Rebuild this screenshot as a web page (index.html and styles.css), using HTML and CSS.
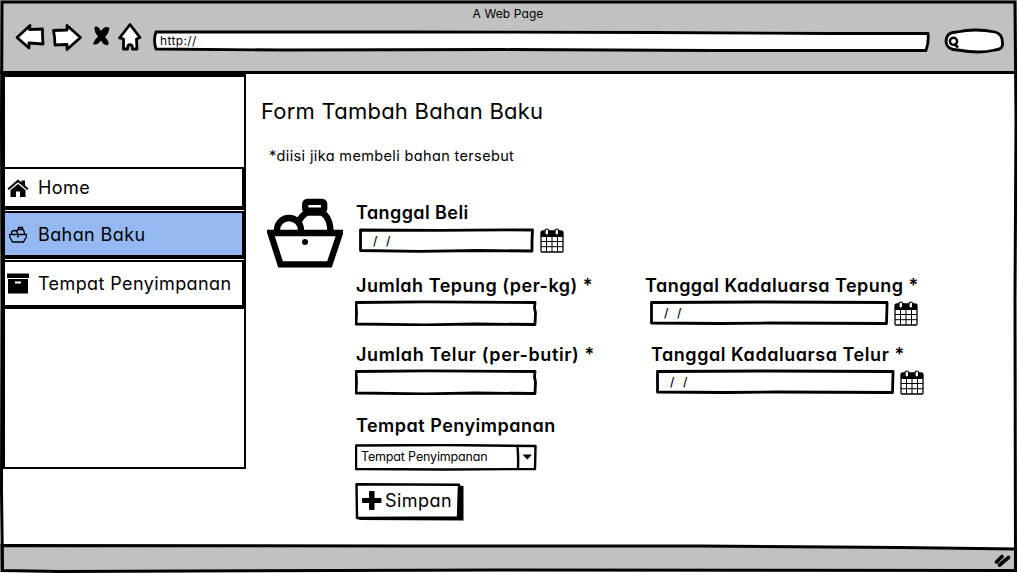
FILE: index.html
```html
<!DOCTYPE html>
<html lang="id">
<head>
<meta charset="utf-8">
<title>A Web Page</title>
<link rel="stylesheet" href="styles.css">
</head>
<body>
<svg class="defs" width="0" height="0">
  <defs>
    <symbol id="basket" viewBox="0 0 76 71">
      <path d="M3.500 35H73L62.500 66.300H13.500Z" class="weave"/>
      <path d="M10 35V32A12 12 0 0 1 34 32V35M31 25Q34 18 40 14.500H55C61 18 63.500 25 63.500 35" class="weave"/>
      <rect x="38.200" y="3.800" width="19" height="8.800" rx="2" class="weave"/>
      <circle cx="38" cy="44" r="3" fill="#000" stroke="none"/>
    </symbol>
    <symbol id="calendar" viewBox="0 0 24 25">
      <path d="M1 5Q1 3 3 3H21Q23 3 23 5V23Q23 24 22 24H2Q1 24 1 23Z" fill="#fff" stroke="#000" stroke-width="1.300"/>
      <path d="M1 4.500Q1 3 3 3H21Q23 3 23 4.500V9H1Z" fill="#000"/>
      <path d="M6.500 9V24M12 9V24M17.500 9V24M1 13.500H23M1 18.700H23" stroke="#000" stroke-width="1"/>
      <rect x="5" y="1" width="3.600" height="6" rx="1.800" fill="#fff" stroke="#000" stroke-width="1.200"/>
      <rect x="15" y="1" width="3.600" height="6" rx="1.800" fill="#fff" stroke="#000" stroke-width="1.200"/>
    </symbol>
  </defs>
</svg>
<div class="window">
  <header class="chrome">
    <div class="page-title">A Web Page</div>
    <div class="toolbar">
      <svg class="nav-icons" width="128" height="30" viewBox="0 0 128 30">
        <path class="sketch" d="M2 14.500L15 2.500L14.500 6.500L27.500 6V12L28 21L14 20V25Z"/>
        <path class="sketch" d="M38.500 7.500L52 7V2.500L65.500 14.500L52 26.500V21.500L40 22L39.500 14Z"/>
        <path d="M79.500 4Q83 2 86 8Q90 2 94.500 5Q94 10 90 14Q95 19 93 22Q89 23 86 17.500Q82 23 78 21Q79 17 83 13.500Q79 9 79.500 4Z"/>
        <path class="sketch" d="M115 1.500L125 14.500L121.500 16L122 26H117.500L117 22.500Q115 21 113 22.500L112.500 26H108.500V16L104.500 15Z"/>
      </svg>
      <div class="address">
        <svg class="frame" width="777" height="22" viewBox="0 0 777 22"><path class="sketch" d="M3 2L250 2L500 2.500L680 3.500L775 3.500Q776 12 773 20.500L560 20.500L350 19.500L130 20L3 19Q0 10 3 2Z"/></svg>
        <span class="address-text">http://</span>
      </div>
      <svg class="search" width="60" height="26" viewBox="0 0 60 26">
        <path class="sketch" d="M2 14Q2 4 13 4Q31 0 51 4Q59 6 58.500 16Q59 21 51 22Q36 26 14 22Q3 22 2 14Z"/>
        <circle cx="9.500" cy="13.300" r="3.600" fill="none" stroke="#000" stroke-width="2.400"/>
        <path d="M10.500 16L14 19.500" stroke="#000" stroke-width="2.600"/>
      </svg>
    </div>
  </header>
  <main class="page">
    <aside class="sidebar">
      <nav class="menu">
        <a class="item home">
          <svg width="22" height="18" viewBox="0 0 22 18"><path d="M0.500 9.500L11 .5L14.500 3.500V1.500H18V6.500L21.500 9.500L20.300 11L11 3.200L1.700 11Z"/><path d="M3.500 11L11 5L18.500 11V18H13V12.500H9V18H3.500Z"/></svg>
          <span>Home</span>
        </a>
        <a class="item active">
          <svg class="outline" width="18" height="17" viewBox="0 0 18 17"><path d="M.5 8.500H17.500V10.500L14.500 16H3.500L.5 10.500ZM2.500 8V7.500A3 3 0 0 1 8.500 7.500V8M7.500 5.500L9 3.500H14Q15.500 5 15.500 8M9.500 3.500V1.500H13.500V3.500M8 10.500H10" stroke-width="1.300"/></svg>
          <span>Bahan Baku</span>
        </a>
        <a class="item storage">
          <svg width="22" height="21" viewBox="0 0 22 21"><path d="M0 .5H22V5H0ZM1 6H21V20.500H1ZM8 8.500V10.500H14V8.500Z" fill-rule="evenodd"/></svg>
          <span>Tempat Penyimpanan</span>
        </a>
      </nav>
    </aside>
    <section class="content">
      <h1>Form Tambah Bahan Baku</h1>
      <p class="note">*diisi jika membeli bahan tersebut</p>
      <div class="form-area">
        <svg class="outline basket" width="76" height="71"><use href="#basket" width="76" height="71"/></svg>
        <form class="form">
          <div class="row r1">
            <div class="field f-buy">
              <label>Tanggal Beli</label>
              <div class="date"><div class="box short"><svg class="frame" width="175" height="25" viewBox="0 0 175 25"><path class="sketch" d="M1.500 2L80 2.300L150 1.800L173.500 2L173 13L173 23L120 22.500L60 23.300L1.500 22.500Z"/></svg><span class="s">/</span><span class="s">/</span></div><svg class="cal" width="24" height="25"><use href="#calendar" width="24" height="25"/></svg></div>
            </div>
          </div>
          <div class="row r2">
            <div class="field f-flour">
              <label>Jumlah Tepung (per-kg) *</label>
              <div class="box plain"><svg class="frame" width="182" height="26" viewBox="0 0 182 26"><path class="sketch" d="M1 2.500L70 1.800L180 2.500L179.500 8L180.500 13L180 24.500L120 24L70 24.800L1 24L1.500 13Z"/></svg></div>
            </div>
            <div class="field f-flour-exp">
              <label>Tanggal Kadaluarsa Tepung *</label>
              <div class="date wide"><div class="box long"><svg class="frame" width="239" height="25" viewBox="0 0 239 25"><path class="sketch" d="M1.500 2.500L110 2L237 2.500L237 5L236.500 23.500L120 23L70 23.500L1.500 23Z"/></svg><span class="s">/</span><span class="s">/</span></div><svg class="cal" width="24" height="25"><use href="#calendar" width="24" height="25"/></svg></div>
            </div>
          </div>
          <div class="row r3">
            <div class="field f-egg">
              <label>Jumlah Telur (per-butir) *</label>
              <div class="box plain"><svg class="frame" width="182" height="26" viewBox="0 0 182 26"><path class="sketch" d="M1 2.500L70 1.800L180 2.500L179.500 8L180.500 13L180 24.500L120 24L70 24.800L1 24L1.500 13Z"/></svg></div>
            </div>
            <div class="field f-egg-exp">
              <label>Tanggal Kadaluarsa Telur *</label>
              <div class="date wide"><div class="box long"><svg class="frame" width="239" height="25" viewBox="0 0 239 25"><path class="sketch" d="M1.500 2.500L110 2L237 2.500L237 5L236.500 23.500L120 23L70 23.500L1.500 23Z"/></svg><span class="s">/</span><span class="s">/</span></div><svg class="cal" width="24" height="25"><use href="#calendar" width="24" height="25"/></svg></div>
            </div>
          </div>
          <div class="row r4">
            <div class="field f-place">
              <label>Tempat Penyimpanan</label>
              <div class="select"><svg class="frame" width="182" height="27" viewBox="0 0 182 27"><path class="sketch thin" d="M1 1.500L90 1L180.500 2L180 25L90 25.500L1 25ZM162.500 2Q163.500 14 163 25"/><path d="M167.500 10.500H177L172.300 15.500Z"/></svg><span>Tempat Penyimpanan</span></div>
            </div>
          </div>
          <div class="save">
            <svg class="frame" width="109" height="38" viewBox="0 0 109 38"><path d="M103 2.500L108.500 3V37.500L4 37V33L103 33Z"/><path class="sketch thin" d="M1.500 1.200L104 1.700L103 34.500L2 35Z"/></svg>
            <svg class="plus" width="20" height="19" viewBox="0 0 20 19"><path d="M7 1Q7 0 8 0H11.500Q12.500 0 12.500 1V7H18.500Q19.500 7 19.500 8V11Q19.500 12 18.500 12H12.500V18Q12.500 19 11.500 19H8Q7 19 7 18V12H1Q0 12 0 11V8Q0 7 1 7H7Z"/></svg>
            <span>Simpan</span>
          </div>
        </form>
      </div>
    </section>
  </main>
  <footer class="status">
    <svg class="frame" width="1017" height="29" viewBox="0 0 1017 29"><path class="bar" d="M2 1.500L400 2L700 2L900 3.500L1016 5V26.500L500 26L60 27.500L2 26.500Z"/></svg>
    <svg class="grip" width="18" height="15" viewBox="0 0 18 15"><path d="M2.500 9L8 3.500M5.500 12L14.500 4.500" stroke="#000" stroke-width="3.600" stroke-linecap="round"/></svg>
  </footer>
  <svg class="edges" width="1017" height="573" viewBox="0 0 1017 573"><path d="M2.500 571L1.500 490L2 300L1.500 120L2 2L1015 2L1016 120L1015 300L1015.500 571"/></svg>
</div>
</body>
</html>
```
FILE: styles.css
```css
* { box-sizing: border-box; }
body {
  margin: 0;
  background: #fff;
  color: #000;
  font-family: Inter, Lato, "Liberation Sans", sans-serif;
  font-feature-settings: "cv11" 1;
}
.defs { position: absolute; }
.window {
  position: relative;
  display: flex;
  flex-direction: column;
  width: 1017px;
  height: 573px;
  overflow: hidden;
}
.edges { position: absolute; inset: 0; pointer-events: none; fill: none; stroke: #000; stroke-width: 3; }
.frame { position: absolute; left: 0; top: 0; z-index: -1; }
.sketch { fill: #fff; stroke: #000; stroke-width: 2.8; stroke-linejoin: round; }
.sketch.thin { stroke-width: 2.4; }
.outline { fill: none; stroke: #000; }
.weave { stroke-width: 6.3; }

.chrome { height: 74px; background: #c1c1c1; border-bottom: 3px solid #000; padding-top: 4px; }
.page-title { text-align: center; font-size: 12px; line-height: 19px; letter-spacing: 0.1px; padding-right: 1px; }
.toolbar { display: flex; align-items: flex-start; padding-left: 15px; }
.nav-icons { display: block; }
.address {
  position: relative;
  z-index: 0;
  width: 777px;
  height: 22px;
  margin: 7px 14px 0 10px;
  padding-left: 7px;
  font-size: 12px;
  line-height: 21px;
  letter-spacing: 0.35px;
}
.search { margin-top: 5px; }

.page { display: flex; height: 470px; }
.sidebar {
  width: 243px;
  height: 395px;
  margin-left: 3px;
  border: solid #000;
  border-width: 3px 2px 2px;
  padding-top: 90px;
}
.menu { display: flex; flex-direction: column; }
.item {
  display: flex;
  align-items: center;
  height: 43px;
  border: solid #000;
  border-width: 2px 2px 4px 0;
  font-size: 18px;
  line-height: 24px;
  letter-spacing: 0.4px;
}
.item svg { flex: none; margin-left: 2px; }
.item span { margin-left: 9px; white-space: nowrap; }
.home { margin-bottom: 1px; }
.active { height: 48px; background: #94b9f2; }
.item.active svg { margin-left: 4px; }
.item.active span { margin-left: 11px; padding-top: 2px; }
.storage { height: 49px; margin-top: 1px; }

.content { padding: 22px 0 0 15px; }
h1 { margin: 0; font-size: 22px; line-height: 31px; font-weight: 400; letter-spacing: 0.23px; }
.note { margin: 19px 0 0 8px; font-size: 14.500px; line-height: 20px; letter-spacing: 0.36px; }
.form-area { display: flex; padding: 32px 0 0 6px; }
.basket { display: block; flex: none; margin: 0 13px 0 0; }
.form { padding-top: 3px; }
.row { display: flex; }
.r1 { height: 73px; }
.r2 { height: 69px; }
.r3 { height: 71px; }
.r4 { height: 69px; }
.field { width: 289px; }
label { display: block; font-size: 18px; line-height: 24px; font-weight: 600; white-space: nowrap; }
.f-buy label { letter-spacing: 0.42px; }
.f-flour label { letter-spacing: 0.5px; }
.f-egg label { letter-spacing: 0.62px; }
.f-flour-exp label { letter-spacing: 0.47px; }
.f-egg-exp label { letter-spacing: 0.55px; }
.f-place label { letter-spacing: 0.5px; }
.box { position: relative; z-index: 0; display: flex; font-size: 12px; line-height: 25px; font-weight: 500; }
.plain { width: 182px; height: 26px; margin: 2px 0 0 -1px; }
.date { display: flex; gap: 6px; padding: 3px 0 0 3px; }
.short { width: 175px; height: 25px; }
.long { width: 239px; height: 25px; }
.wide { padding: 2px 0 0 5px; gap: 5px; }
.wide .cal { margin-top: 1px; }
.s { width: 13px; }
.s:first-of-type { margin-left: 14px; }
.f-egg-exp { margin-left: 6px; }
.select {
  position: relative;
  z-index: 0;
  width: 182px;
  height: 27px;
  margin: 6px 0 0 -1px;
  padding-left: 6px;
  font-size: 12.500px;
  line-height: 25px;
  letter-spacing: -0.16px;
}
.save {
  position: relative;
  z-index: 0;
  display: flex;
  align-items: center;
  width: 109px;
  height: 38px;
  margin-left: -1px;
  padding: 0 0 3px 7px;
  font-size: 18px;
  line-height: 24px;
  letter-spacing: 0.45px;
}
.save span { margin-left: 3px; }

.status { position: relative; z-index: 0; display: flex; justify-content: flex-end; height: 29px; padding: 9px 5px 0 0; }
.bar { fill: #c1c1c1; stroke: #000; stroke-width: 3; }
```
